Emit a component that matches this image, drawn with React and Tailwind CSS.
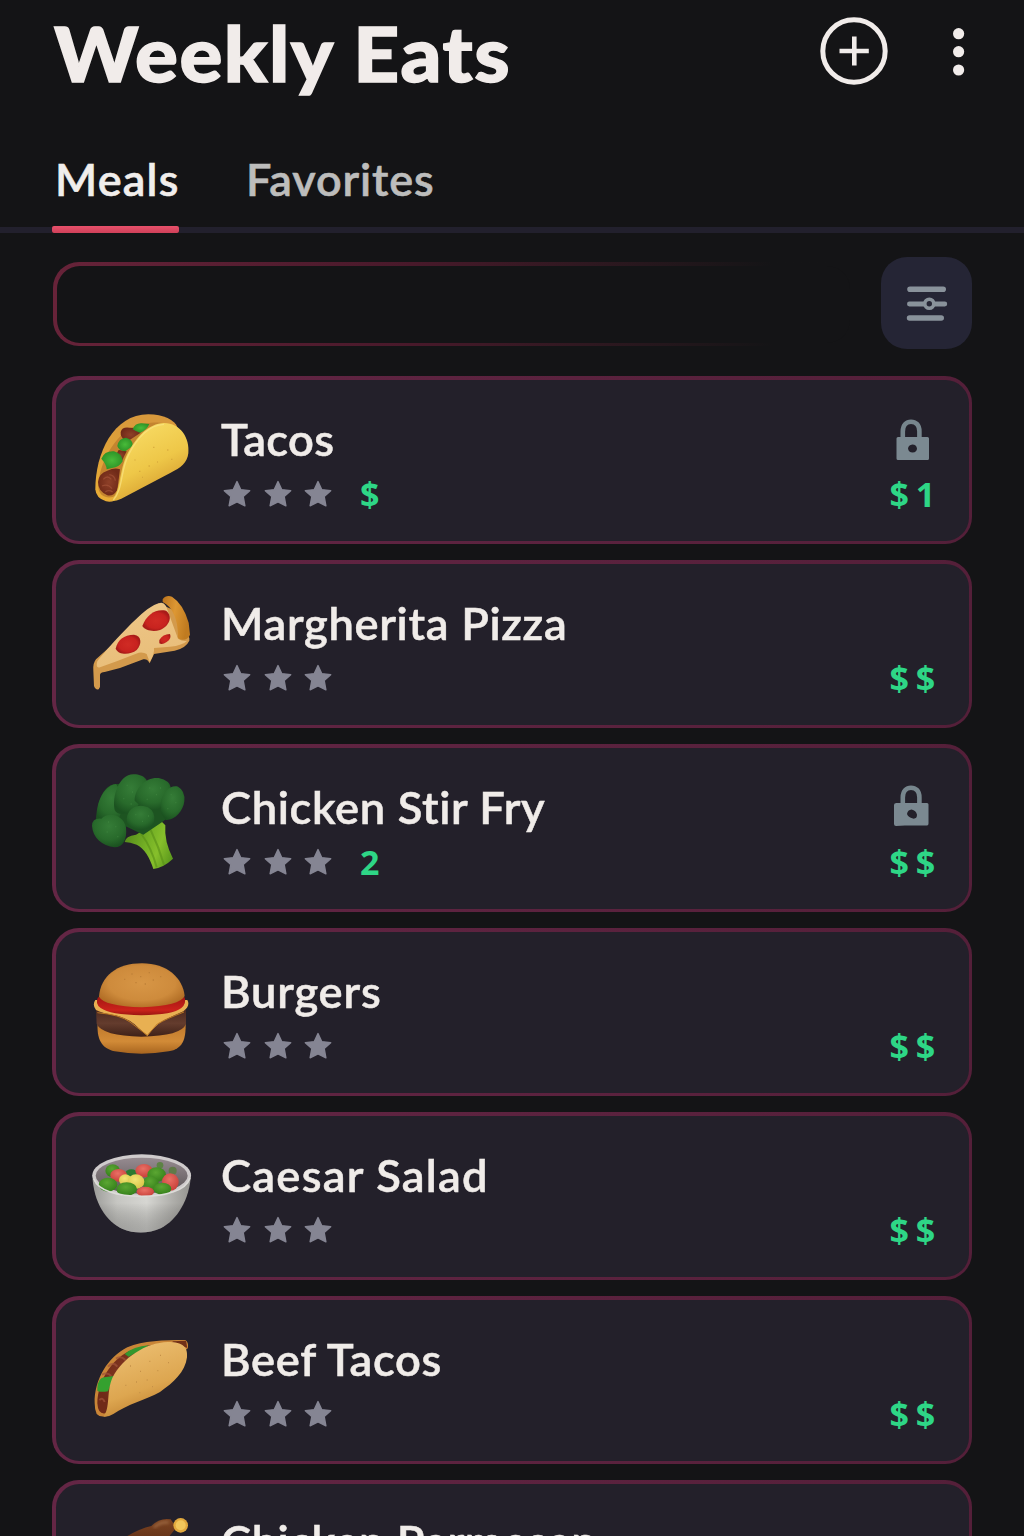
import React from 'react';

const Defs = () => (
  <svg className="absolute h-0 w-0" aria-hidden="true">
    <defs>
      <linearGradient id="tacoFront" x1="0.2" y1="0" x2="0.7" y2="1">
        <stop offset="0" stopColor="#f9de68" />
        <stop offset="0.55" stopColor="#eec748" />
        <stop offset="1" stopColor="#cf9228" />
      </linearGradient>
      <linearGradient id="tacoBack" x1="0.3" y1="0" x2="0" y2="1">
        <stop offset="0" stopColor="#d8993c" />
        <stop offset="1" stopColor="#e9ad35" />
      </linearGradient>
      <linearGradient id="beefFront" x1="0.3" y1="0" x2="0.7" y2="1">
        <stop offset="0" stopColor="#ecbf72" />
        <stop offset="0.6" stopColor="#dda650" />
        <stop offset="1" stopColor="#b87828" />
      </linearGradient>
      <linearGradient id="cheese" x1="0" y1="0" x2="0.3" y2="1">
        <stop offset="0" stopColor="#edc789" />
        <stop offset="1" stopColor="#e9be7a" />
      </linearGradient>
      <linearGradient id="crust" x1="0" y1="0" x2="1" y2="0.3">
        <stop offset="0" stopColor="#bb731d" />
        <stop offset="0.5" stopColor="#dd9733" />
        <stop offset="1" stopColor="#c07b20" />
      </linearGradient>
      <radialGradient id="pepperoni">
        <stop offset="0" stopColor="#d02b24" />
        <stop offset="0.75" stopColor="#c8231f" />
        <stop offset="1" stopColor="#a81b18" />
      </radialGradient>
      <radialGradient id="floret" cx="0.5" cy="0.35" r="0.65">
        <stop offset="0" stopColor="#357c37" />
        <stop offset="0.65" stopColor="#286a2b" />
        <stop offset="1" stopColor="#1b5220" />
      </radialGradient>
      <linearGradient id="stem" x1="0" y1="0.3" x2="1" y2="0.7">
        <stop offset="0" stopColor="#568a1b" />
        <stop offset="0.45" stopColor="#74b025" />
        <stop offset="0.7" stopColor="#86bf2b" />
        <stop offset="1" stopColor="#5d9a1d" />
      </linearGradient>
      <radialGradient id="bun" cx="0.5" cy="0.45" r="0.65">
        <stop offset="0" stopColor="#d79646" />
        <stop offset="0.6" stopColor="#ce8b3c" />
        <stop offset="1" stopColor="#a8641e" />
      </radialGradient>
      <linearGradient id="bunBottom" x1="0" y1="0" x2="0" y2="1">
        <stop offset="0" stopColor="#bd772b" />
        <stop offset="0.6" stopColor="#d28b37" />
        <stop offset="1" stopColor="#a8651f" />
      </linearGradient>
      <linearGradient id="tomato" x1="0" y1="0" x2="0" y2="1">
        <stop offset="0" stopColor="#a51713" />
        <stop offset="0.7" stopColor="#cb221b" />
        <stop offset="1" stopColor="#9a1511" />
      </linearGradient>
      <linearGradient id="patty" x1="0" y1="0" x2="0" y2="1">
        <stop offset="0" stopColor="#4c2a20" />
        <stop offset="0.5" stopColor="#643c2d" />
        <stop offset="1" stopColor="#3f2118" />
      </linearGradient>
      <linearGradient id="bowl" x1="0" y1="0" x2="1" y2="0">
        <stop offset="0" stopColor="#9b9b98" />
        <stop offset="0.25" stopColor="#c6c6c2" />
        <stop offset="0.55" stopColor="#d6d6d2" />
        <stop offset="1" stopColor="#94938f" />
      </linearGradient>
      <linearGradient id="bowlShade" x1="0" y1="0" x2="0" y2="1">
        <stop offset="0.5" stopColor="#000" stopOpacity="0" />
        <stop offset="1" stopColor="#555" stopOpacity="0.35" />
      </linearGradient>
      <linearGradient id="bowlInside" x1="0" y1="0" x2="0" y2="1">
        <stop offset="0" stopColor="#968b90" />
        <stop offset="1" stopColor="#5b5557" />
      </linearGradient>
      <radialGradient id="pea" cx="0.45" cy="0.35" r="0.65">
        <stop offset="0" stopColor="#5ba632" />
        <stop offset="1" stopColor="#35801b" />
      </radialGradient>
      <radialGradient id="cherry" cx="0.45" cy="0.35" r="0.65">
        <stop offset="0" stopColor="#e97065" />
        <stop offset="1" stopColor="#c9403a" />
      </radialGradient>
      <radialGradient id="corn" cx="0.45" cy="0.35" r="0.65">
        <stop offset="0" stopColor="#f2e576" />
        <stop offset="1" stopColor="#d9c548" />
      </radialGradient>
      <radialGradient id="meat">
        <stop offset="0" stopColor="#8e4028" />
        <stop offset="1" stopColor="#702a18" />
      </radialGradient>
      <radialGradient id="leaf">
        <stop offset="0" stopColor="#49bb3a" />
        <stop offset="1" stopColor="#2d9427" />
      </radialGradient>
      <linearGradient id="drumstick" x1="0" y1="0" x2="0" y2="1">
        <stop offset="0" stopColor="#7e4522" />
        <stop offset="1" stopColor="#5b2c15" />
      </linearGradient>
      <filter id="soft" x="-30%" y="-30%" width="160%" height="160%">
        <feGaussianBlur stdDeviation="5" />
      </filter>
    </defs>
  </svg>
);

const Taco = () => (
  <g transform="translate(0 60)">
    <path d="M46 268 C46 160 100 43 205 43 C250 43 285 60 292 82 L120 290 Q100 310 78 304 Q48 295 46 268Z" fill="url(#tacoBack)" />
    <path d="M55 262 C55 190 112 82 190 72 C225 66 250 66 260 74 L112 284 Q90 298 70 288 Q56 280 55 262Z" fill="#c4842f" />
    <path d="M122 96 Q126 80 148 83 Q172 82 182 98 L140 126 Q120 112 122 96Z" fill="url(#meat)" />
    <path d="M116 150 L140 154 L126 182 L104 170Z" fill="url(#meat)" />
    <path d="M54 246 Q56 220 82 212 Q104 202 120 208 L112 270 Q100 290 82 286 Q54 274 54 246Z" fill="url(#meat)" />
    <path d="M70 238 Q82 224 94 238 M66 258 Q84 250 96 266 M88 224 Q104 226 106 242 M76 276 Q86 268 98 276" fill="none" stroke="#a8573c" strokeWidth="4" opacity="0.6" />
    <path d="M158 88 Q165 68 186 70 L208 72 Q200 92 180 98 Q166 94 158 88Z" fill="url(#leaf)" />
    <path d="M112 138 Q116 114 138 113 Q160 118 158 138 L136 154 Q116 152 112 138Z" fill="url(#leaf)" />
    <path d="M64 176 Q74 152 102 154 Q126 160 128 184 Q118 202 96 204 L80 208 Q80 194 64 176Z" fill="url(#leaf)" />
    <path d="M94 303 C124 268 116 214 142 162 C168 112 206 70 252 69 C302 69 330 115 325 160 C322 188 302 204 272 218 L124 296 Q108 304 94 303Z" fill="url(#tacoFront)" />
    <path d="M100 300 C130 266 120 214 146 164 C171 114 208 74 252 73" fill="none" stroke="#fbe484" strokeWidth="4" opacity="0.7" />
    <path d="M220 142h3M262 150h3M178 214h3M206 198h3M186 232h2M274 178h3M232 186h2M164 180h2" stroke="#d0a038" strokeWidth="4" />
  </g>
);

const Pizza = () => (
  <g transform="translate(0 48)">
    <path d="M236 70 L48 238 Q38 250 40 272 L42 318 Q46 330 56 328 Q62 322 60 310 L60 284 Q62 276 74 276 L120 264 L190 238 Q200 236 204 242 L209 250 L222 222 L284 212 Q318 204 328 182 L328 174 L280 90Z" fill="#d39a4c" />
    <path d="M240 69 Q250 66 258 78 L294 176 Q310 186 322 182 Q308 196 270 200 L222 204 Q224 222 209 246 L200 222 Q192 216 176 218 L110 244 L60 262 Q46 266 52 244 C80 208 160 120 202 88 Q224 72 240 69Z" fill="url(#cheese)" />
    <path d="M248 58 Q258 44 276 50 Q310 72 326 128 L330 164 Q324 180 306 179 Q290 178 294 166 C294 120 278 80 248 66Z" fill="url(#crust)" />
    <path d="M187 138 C200 104 226 86 258 92 C280 108 268 138 240 150 C220 156 196 152 187 138Z" fill="url(#pepperoni)" />
    <path d="M107 206 C112 180 132 164 162 164 C186 168 186 192 170 210 C150 226 116 226 107 206Z" fill="url(#pepperoni)" />
    <path d="M238 180 Q248 162 270 162 Q276 176 260 186 Q246 196 238 190Z" fill="url(#pepperoni)" />
  </g>
);

const Broccoli = () => (
  <g transform="translate(0 36)">
    <path d="M134 246 Q136 228 168 224 L240 180 L256 196 Q252 244 279 296 Q252 322 220 327 Q202 270 170 254 Q150 246 134 246Z" fill="url(#stem)" />
    <path d="M184 222 Q214 262 230 322 M212 210 Q236 260 252 314" stroke="#578d18" strokeWidth="6" fill="none" opacity="0.6" />
    <path d="M108 72 Q72 74 56 130 L48 178 L140 200 L190 224 L250 184 L290 150 L200 70Z" fill="#1d5421" />
    <path d="M108 72 C66 78 44 140 50 190 L110 190 L140 120Z" fill="url(#floret)" />
    <path d="M104 150 C96 110 116 44 160 43 C190 42 214 62 200 92 C180 120 178 150 140 160 Q112 166 104 150Z" fill="url(#floret)" />
    <path d="M164 122 C164 82 200 50 236 54 Q270 62 272 82 C256 110 250 130 238 148 Q200 160 164 122Z" fill="url(#floret)" />
    <path d="M242 134 C244 96 272 74 294 80 Q316 92 313 124 C310 152 284 182 258 180 Q240 168 242 134Z" fill="url(#floret)" />
    <path d="M140 176 C144 142 176 130 204 142 Q228 156 222 186 C212 208 180 216 156 204 Q140 194 140 176Z" fill="url(#floret)" />
    <path d="M36 198 Q36 174 64 176 C84 154 130 162 138 202 C142 240 128 262 104 262 C66 258 38 232 36 198Z" fill="url(#floret)" />
    <path d="M84 186h3M106 200h3M80 216h3M112 230h3M140 76h3M156 96h3M130 116h3M152 132h3M208 84h3M228 104h3M200 118h3M240 84h3M272 104h3M286 128h3M262 146h3M166 164h3M186 184h3M204 168h3" stroke="#438a43" strokeWidth="4" opacity="0.6" />
  </g>
);

const Burger = () => (
  <g transform="translate(0 54)">
    <path d="M53 218 L317 218 C318 270 308 296 266 304 Q184 318 104 304 C62 294 50 264 53 218Z" fill="url(#bunBottom)" />
    <path d="M48 180 L318 180 L318 222 Q304 258 184 260 Q68 258 50 222Z" fill="url(#patty)" />
    <path d="M46 150 Q36 164 48 180 Q66 190 106 196 Q150 206 176 234 L202 258 Q232 216 270 202 L310 184 Q332 166 322 150Z" fill="#e8b052" />
    <path d="M52 188 Q120 194 150 216 L202 256 L232 222 Q260 206 312 186" fill="none" stroke="#b97624" strokeWidth="3" />
    <path d="M54 142 Q44 162 62 174 Q90 194 184 196 Q280 194 304 174 Q320 162 314 142Z" fill="url(#tomato)" />
    <path d="M57 140 C62 78 110 40 186 40 C262 40 308 84 314 138 Q300 168 186 172 Q72 168 57 140Z" fill="url(#bun)" />
    <path d="M132 88h4M154 72h4M180 80h4M206 68h4M218 90h4M166 98h4M194 102h4M240 80h4" stroke="#bf8138" strokeWidth="4" />
  </g>
);

const Salad = () => (
  <g transform="translate(0 72)">
    <path d="M37 104 C40 190 80 244 126 266 Q184 290 244 264 C290 240 330 180 333 100Z" fill="url(#bowl)" />
    <path d="M37 104 C40 190 80 244 126 266 Q184 290 244 264 C290 240 330 180 333 100Z" fill="url(#bowlShade)" />
    <ellipse cx="185" cy="106" rx="148" ry="63" fill="#cfcbcc" />
    <ellipse cx="185" cy="107" rx="138" ry="54" fill="url(#bowlInside)" />
    <circle cx="240" cy="76" r="10" fill="#5d8245" />
    <circle cx="278" cy="92" r="12" fill="#607a49" />
    <ellipse cx="98" cy="92" rx="22" ry="19" fill="url(#pea)" />
    <ellipse cx="154" cy="100" rx="18" ry="12" fill="#2a7a30" />
    <ellipse cx="116" cy="106" rx="25" ry="19" fill="url(#cherry)" />
    <ellipse cx="192" cy="92" rx="26" ry="20" fill="url(#cherry)" />
    <ellipse cx="230" cy="104" rx="28" ry="22" fill="url(#pea)" />
    <ellipse cx="271" cy="126" rx="25" ry="26" fill="url(#cherry)" />
    <ellipse cx="212" cy="130" rx="24" ry="22" fill="url(#pea)" />
    <ellipse cx="84" cy="134" rx="28" ry="21" fill="url(#pea)" />
    <ellipse cx="136" cy="120" rx="19" ry="17" fill="url(#corn)" />
    <ellipse cx="168" cy="125" rx="25" ry="22" fill="url(#corn)" />
    <ellipse cx="140" cy="147" rx="31" ry="20" fill="url(#pea)" />
    <ellipse cx="247" cy="146" rx="27" ry="18" fill="url(#pea)" />
    <ellipse cx="196" cy="155" rx="26" ry="15" fill="url(#cherry)" />
    <path d="M42 118 C54 152 112 169 185 169 C258 169 318 150 329 116" fill="none" stroke="#dddcd9" strokeWidth="5" strokeLinecap="round" />
  </g>
);

const BeefTaco = () => (
  <g transform="translate(0 60)">
    <path d="M44 250 C42 180 84 110 142 82 C190 62 250 60 316 60 Q326 66 324 84 L90 284 Q64 296 50 282 Q44 270 44 250Z" fill="#c98537" />
    <path d="M52 250 C54 184 92 122 146 94 C190 76 240 70 290 66 L314 70 L90 262 L76 280 Q54 284 52 250Z" fill="url(#meat)" />
    <path d="M84 140 Q100 122 112 140 M66 164 Q82 156 94 168 M108 116 Q122 106 136 120 M58 240 Q68 230 74 246" stroke="#a05339" strokeWidth="6" fill="none" opacity="0.7" />
    <path d="M276 64 L318 62 L322 84 L300 76Z" fill="#703018" />
    <path d="M134 102 Q160 80 206 76 Q192 92 168 98 L146 110Z" fill="#34972e" />
    <path d="M52 204 Q54 174 72 172 L102 168 L84 214 Q60 218 52 212Z" fill="#35a12f" />
    <path d="M70 290 C92 266 78 214 98 172 C128 114 196 68 264 66 C310 66 324 82 321 112 C316 156 280 188 240 216 C200 238 140 254 100 282 Q84 292 70 290Z" fill="url(#beefFront)" />
    <path d="M150 138h3M180 154h3M208 124h3M240 106h3M232 152h3M168 186h3M200 180h3M136 196h3M264 128h3M216 200h3M178 218h3" stroke="#c59148" strokeWidth="4" />
  </g>
);

const Drumstick = () => (
  <g transform="translate(0 -12)">
    <path d="M120 182 Q170 148 214 138 Q240 112 272 118 L290 144 Q270 160 250 200Z" fill="url(#drumstick)" />
    <path d="M222 142 Q244 124 266 128" stroke="#a06c45" strokeWidth="7" fill="none" filter="url(#soft)" />
    <circle cx="302" cy="136" r="22" fill="#e2a93e" />
    <circle cx="302" cy="136" r="15" fill="#f2c75b" />
  </g>
);

const Star = () => (
  <svg viewBox="0 0 28 28" className="h-7 w-7 shrink-0">
    <path d="M14 1.6 L17.7 9.6 L26.7 10.7 L20.2 16.6 L21.9 25.8 L14 21.9 L6.1 25.8 L7.8 16.6 L1.3 10.7 L10.3 9.6Z" fill="#858593" stroke="#858593" strokeWidth="1.4" strokeLinejoin="round" />
  </svg>
);

const Lock = ({ wide }) =>
  wide ? (
    <svg viewBox="0 0 40 44" className="-mt-0.5 h-11 w-10">
      <path d="M9.8 20 V14.5 C9.8 7.5 13.6 4.7 18 4.7 C22.4 4.7 26.4 7.5 26.4 14.5 V20" fill="none" stroke="#77868d" strokeWidth="4.6" />
      <path fillRule="evenodd" d="M3.5 20 H34 Q35.5 20 35.5 21.5 V40.4 Q35.5 42.4 34 42.4 L12 42.6 L3 43 Q1 43 1 41 V22 Q1 20 3.5 20Z M14 31 Q15 34 20 35.6 Q24 36 24 31.8 Q23 27.6 18.6 26.6 Q14.6 27 14 31Z" fill="#7b8991" />
    </svg>
  ) : (
    <svg viewBox="0 0 40 44" className="h-11 w-10">
      <path d="M9.8 20 V14.5 C9.8 7.5 13.6 4.7 18 4.7 C22.4 4.7 26.4 7.5 26.4 14.5 V20" fill="none" stroke="#77868d" strokeWidth="4.6" />
      <path fillRule="evenodd" d="M5 20 H34.5 Q36 20 36 21.5 V41.5 Q36 43 34.5 43 H5 Q3.5 43 3.5 41.5 V21.5 Q3.5 20 5 20Z M15 31.4 Q15.6 35.4 19.6 35.6 Q24 35 24 31.4 Q23.4 27.4 19.4 27.4 Q15.4 27.8 15 31.4Z" fill="#7b8991" />
    </svg>
  );

const meals = [
  { name: 'Tacos', Icon: Taco, note: '$', lock: 'narrow', price: '$1', tracking: 'tracking-[0.3px]' },
  { name: 'Margherita Pizza', Icon: Pizza, price: '$$', tracking: 'tracking-[0.65px]' },
  { name: 'Chicken Stir Fry', Icon: Broccoli, note: '2', lock: 'wide', price: '$$', tracking: 'tracking-[0.6px]' },
  { name: 'Burgers', Icon: Burger, price: '$$', tracking: 'tracking-[0.8px]' },
  { name: 'Caesar Salad', Icon: Salad, price: '$$', tracking: 'tracking-[1.2px]' },
  { name: 'Beef Tacos', Icon: BeefTaco, price: '$$', tracking: 'tracking-[0.7px]' },
  { name: 'Chicken Parmesan', Icon: Drumstick, price: '$$', tracking: '-mt-[2px] mb-[2px] tracking-[0.5px]' },
];

const MealCard = ({ name, Icon, note, lock, price, tracking }) => (
  <article className="h-[168px] shrink-0 rounded-[27px] bg-linear-to-r from-[#642645] to-[#541f39] p-[3.5px]">
    <div className="flex h-full rounded-[23.5px] bg-[#23202a]">
      <svg viewBox="0 0 390 480" className="ml-[24.5px] h-[160px] w-[130px] shrink-0">
        <Icon />
      </svg>
      <div className="ml-[11px] flex flex-1 flex-col pt-[32px]">
        <h2 className={`h-[54px] origin-left scale-x-[1.03] text-[44px] leading-[54px] font-semibold whitespace-nowrap text-[#f0ece9] [-webkit-text-stroke:0.5px_#f0ece9] ${tracking}`}>{name}</h2>
        <div className="mt-[11px] flex h-[34px] items-center gap-[12.5px] pl-[2px]">
          <Star />
          <Star />
          <Star />
          {note && <span className="ml-[15.5px] font-['Open_Sans',sans-serif] text-[34px] leading-[34px] font-bold text-[#2ed686]">{note}</span>}
        </div>
      </div>
      <div className="mr-[23px] flex w-[56px] flex-col pt-[37px]">
        <div className="h-[46px] pl-[3.5px]">{lock && <Lock wide={lock === 'wide'} />}</div>
        <span className="mt-[14px] font-['Open_Sans',sans-serif] text-[34px] leading-[34px] font-bold tracking-[6.9px] text-[#2ed686]">{price}</span>
      </div>
    </div>
  </article>
);

export default function App() {
  return (
    <main className="flex h-[1536px] w-[1024px] flex-col overflow-hidden bg-[#141416] font-['Lato','Liberation_Sans',sans-serif]">
      <Defs />
      <header className="flex h-[110px] shrink-0 items-start justify-between pr-[47px] pl-[54px]">
        <h1 className="origin-left scale-x-[1.04] pt-[4px] text-[77px] leading-[96px] font-black tracking-[1.4px] whitespace-nowrap text-[#f1ecea] [-webkit-text-stroke:1.4px_#f1ecea]">Weekly Eats</h1>
        <div className="flex pt-[16px]">
          <svg viewBox="0 0 70 70" className="h-[70px] w-[70px]" fill="none" stroke="#f1ecea">
            <circle cx="35" cy="35" r="31.2" strokeWidth="5" />
            <path d="M35.3 20.5V49.5M20.5 35H49.8" strokeWidth="4.6" />
          </svg>
          <svg viewBox="0 0 36 70" className="ml-[52px] h-[70px] w-9" fill="#f1ecea">
            <circle cx="17.6" cy="17.7" r="5.6" />
            <circle cx="17.6" cy="35.7" r="5.6" />
            <circle cx="17.6" cy="54" r="5.6" />
          </svg>
        </div>
      </header>
      <nav className="flex h-[123px] shrink-0 flex-col justify-between">
        <div className="flex pt-[41px] pl-[55px] text-[45px] leading-[56px] font-semibold">
          <span className="w-[191px] tracking-[1.2px] text-[#f1eeec] [-webkit-text-stroke:0.6px_#f1eeec]">Meals</span>
          <span className="tracking-[0.9px] text-[#bdbdbc] [-webkit-text-stroke:0.6px_#bdbdbc]">Favorites</span>
        </div>
        <div className="flex h-[7px] items-end">
          <div className="h-[6px] w-[52px] bg-[#22202d]" />
          <div className="h-[7px] w-[127px] rounded-[2px] bg-linear-to-b from-[#e8516b] to-[#cf4059]" />
          <div className="h-[6px] flex-1 bg-[#22202d]" />
        </div>
      </nav>
      <section className="mt-[24px] flex h-[92px] shrink-0 items-center justify-between pr-[52px] pl-[53px]">
        <div className="mt-[2px] h-[84px] w-[800px] rounded-[26px] bg-linear-to-r from-[#672339] via-[#48192a] via-45% to-[#141416] to-90% p-[3.5px]">
          <div className="h-full rounded-[23px] bg-[#141416]" />
        </div>
        <button className="flex h-[92px] w-[91px] items-center justify-center rounded-[26px] bg-[#252535]">
          <svg viewBox="0 0 91 92" className="h-[92px] w-[91px]" fill="none" stroke="#89929b" strokeWidth="5.6" strokeLinecap="round">
            <path d="M29 32.3H62.2M28.6 61H60.2" />
            <path d="M28.4 47H63.8" strokeWidth="4.8" />
            <circle cx="48.3" cy="46.8" r="4.5" fill="#252535" strokeWidth="3.6" />
          </svg>
        </button>
      </section>
      <section className="mt-[27px] flex flex-col gap-4 px-[52px]">
        {meals.map((meal) => (
          <MealCard key={meal.name} {...meal} />
        ))}
      </section>
    </main>
  );
}
